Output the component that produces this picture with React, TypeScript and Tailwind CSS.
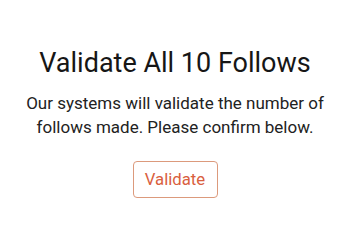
export default function App() {
  return (
    <div className="flex h-[222px] w-[350px] flex-col items-center bg-white pt-[47px] text-center font-['Roboto',sans-serif]">
      <h1 className="text-[27px] leading-[32px] text-[#161616]">Validate All 10 Follows</h1>
      <p className="mt-[12px] text-[17px] leading-[24px] text-[#222]">
        Our systems will validate the number of
        <br />
        follows made. Please confirm below.
      </p>
      <button className="mt-[22px] h-[37px] w-[85px] rounded-[4px] border border-[#dc9a7c] text-[16.75px] text-[#d9603e]">
        Validate
      </button>
    </div>
  );
}
